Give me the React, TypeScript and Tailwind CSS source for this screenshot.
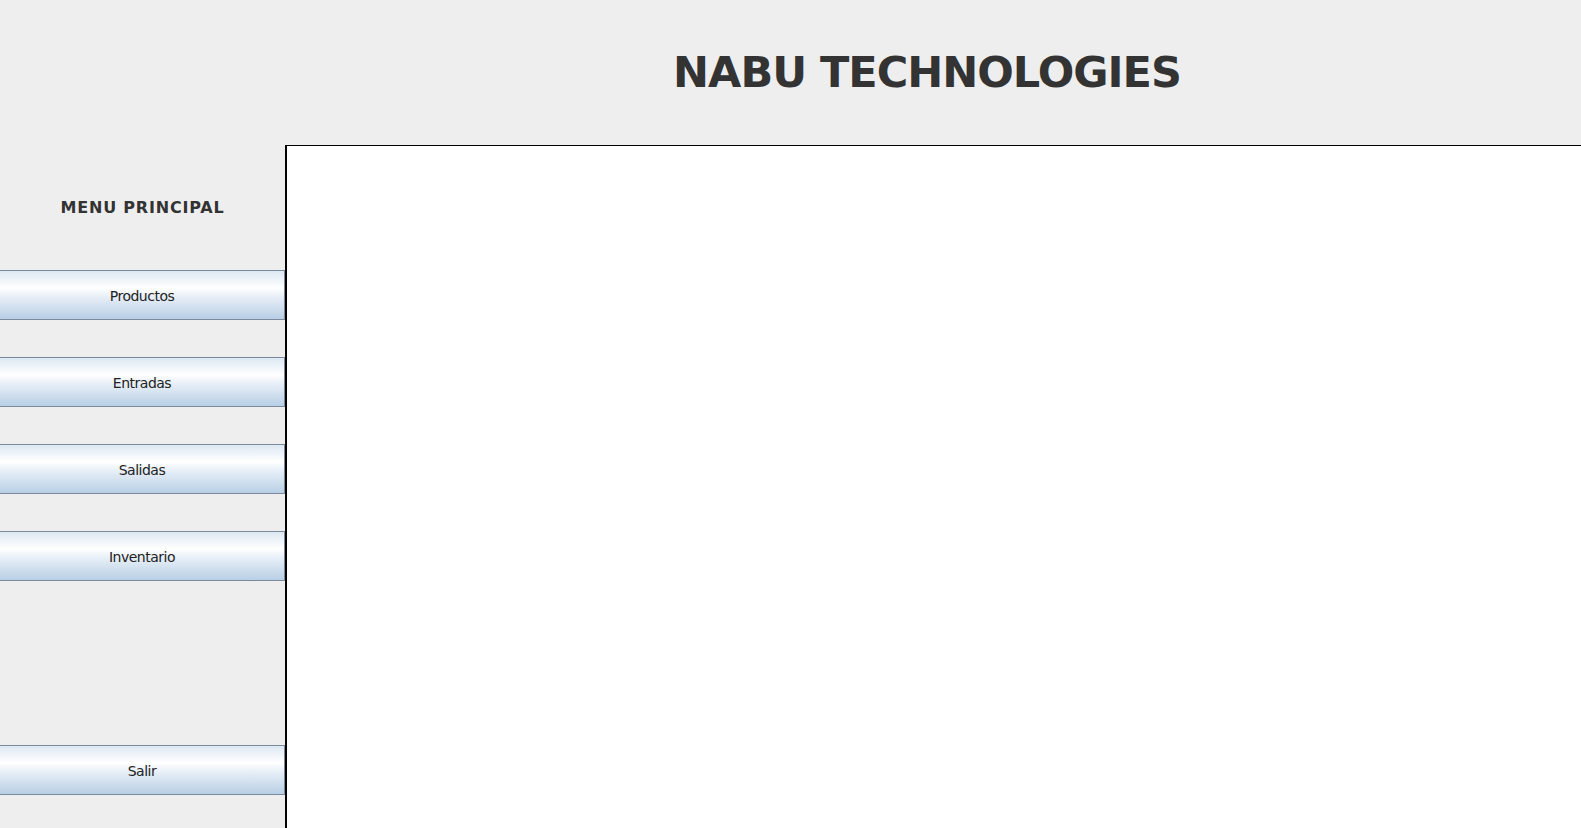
const menuItems = ["Productos", "Entradas", "Salidas", "Inventario"];

function MenuButton({ label, className = "" }: { label: string; className?: string }) {
  return (
    <button
      className={`h-[50px] w-full border border-l-0 border-[#7a8a9c] bg-[linear-gradient(to_bottom,#dde8f3_0%,#ffffff_35%,#e6eef7_55%,#b8cfe5_100%)] pt-[2px] text-[14px] tracking-[-0.5px] text-[#222] ${className}`}
      style={{ fontFamily: "Tahoma, 'DejaVu Sans', sans-serif" }}
    >
      {label}
    </button>
  );
}

export default function App() {
  return (
    <div
      className="flex h-[828px] w-[1581px] flex-col overflow-hidden bg-[#eeeeee]"
      style={{ fontFamily: "Tahoma, 'DejaVu Sans', sans-serif" }}
    >
      {/* Encabezado */}
      <header className="flex h-[145px] shrink-0 items-start pl-[285px]">
        <h1 className="w-full pt-[46px] pr-[12px] text-center text-[43px] font-bold leading-[52px] tracking-[-1px] text-[#333333]">
          NABU TECHNOLOGIES
        </h1>
      </header>

      <div className="flex flex-1">
        {/* Menú lateral */}
        <aside className="flex w-[285px] shrink-0 flex-col">
          <div className="flex h-[125px] items-center justify-center pt-[1px]">
            <span className="text-[16px] font-bold tracking-[0.8px] text-[#333333]">MENU PRINCIPAL</span>
          </div>
          <div className="flex flex-col gap-[37px]">
            {menuItems.map((item) => (
              <MenuButton key={item} label={item} />
            ))}
          </div>
          <MenuButton label="Salir" className="mt-[164px]" />
        </aside>

        {/* Panel de contenido */}
        <main className="flex-1 border-t border-l-2 border-black bg-white" />
      </div>
    </div>
  );
}
